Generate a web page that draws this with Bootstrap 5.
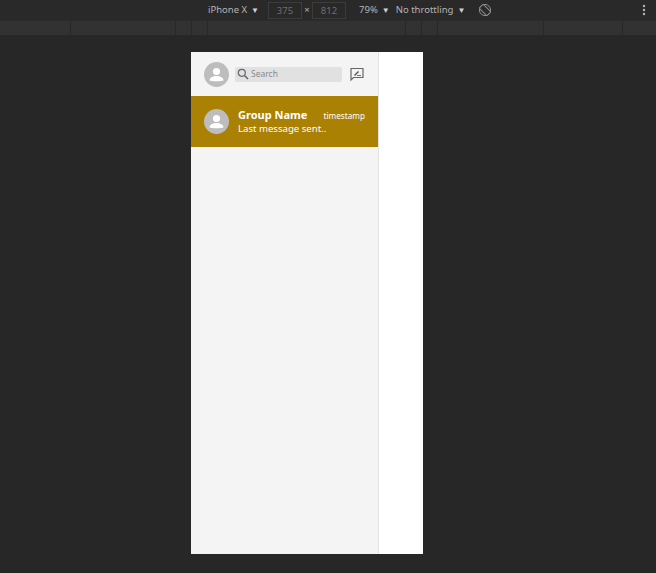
<!DOCTYPE html>
<html lang="en">
<head>
  <meta charset="UTF-8">
  <meta name="viewport" content="width=device-width, initial-scale=1.0">
  <title>Chat</title>
  <link href="https://cdn.jsdelivr.net/npm/bootstrap@5.3.3/dist/css/bootstrap.min.css" rel="stylesheet">
  <style>
    html, body { height: 100%; overflow: hidden; }
    body { background: #272727; font-family: "Noto Sans", "Open Sans", sans-serif; }
    .dev-top { height: 20px; padding-left: 208px; font-size: 9.5px; color: #b4b4b4; white-space: nowrap; background: #292929; }
    .dev-num { width: 34px; height: 17px; margin-left: 9px; border: 1px solid #3c3c3c; color: #6e6e6e; line-height: 15px; text-align: center; }
    .dev-x { width: 10px; text-align: center; }
    .dev-x + .dev-num { margin-left: 0; }
    .dev-caret { font-size: 8px; margin-left: 4px; color: #d0d0d0; }
    .dev-zoom { margin-left: 13px; }
    .dev-net { margin-left: 6px; }
    .dev-rotate { margin-left: 13px; }
    .dev-more { margin-left: 150px; }
    .dev-ruler { height: 15px; background: #323232; border-top: 1px solid #2b2b2b; }
    .dev-tick { border-right: 1px solid #272727; height: 100%; }
    .phone { width: 232px; height: 502px; margin: 17px 0 0 191px; background: #fff; }
    .side { width: 188px; background: #f4f4f4; border-right: 1px solid #e2e2e2; }
    .side-head { height: 44px; padding-left: 13px; }
    .avatar { width: 25px; height: 25px; flex: none; }
    .search-box { width: 107px; height: 15px; flex: none; background: #e1e1e1; border-radius: 2px; font-size: 8.5px; color: #8a8a8a; margin: 0 8px 0 6px; padding-left: 2px; }
    .search-ico { margin-right: 2px; flex: none; }
    .chat-row { height: 51px; background: #ab8103; color: #fff; padding: 0 13px; }
    .chat-name { font-size: 11px; font-weight: 700; line-height: 13px; }
    .chat-time { font-size: 8.2px; line-height: 13px; padding-top: 2px; }
    .chat-last { font-size: 9.6px; line-height: 13px; }
    .chat-body { margin-left: 9px; margin-bottom: 1px; }
  </style>
</head>
<body>
  <div class="dev-top d-flex align-items-center">
    <span>iPhone X<span class="dev-caret">▼</span></span>
    <span class="dev-num">375</span>
    <span class="dev-x">×</span>
    <span class="dev-num">812</span>
    <span class="dev-zoom">79%<span class="dev-caret">▼</span></span>
    <span class="dev-net">No throttling<span class="dev-caret">▼</span></span>
    <svg class="dev-rotate" width="14" height="14" viewBox="0 0 14 14" fill="none" stroke="#8c8c8c">
      <circle cx="7" cy="7" r="5.600"/>
      <rect x="4.200" y="1.600" width="5.600" height="10.800" rx="1" transform="rotate(-45 7 7)" fill="#292929"/>
    </svg>
    <svg class="dev-more" width="4" height="12" viewBox="0 0 4 12" fill="#b4b4b4">
      <circle cx="2" cy="2" r="1.200"/><circle cx="2" cy="6" r="1.200"/><circle cx="2" cy="10" r="1.200"/>
    </svg>
  </div>
  <div class="dev-ruler d-flex">
    <div class="dev-tick" style="width:71px"></div>
    <div class="dev-tick" style="width:105px"></div>
    <div class="dev-tick" style="width:16px"></div>
    <div class="dev-tick" style="width:16px"></div>
    <div class="dev-tick" style="width:198px"></div>
    <div class="dev-tick" style="width:16px"></div>
    <div class="dev-tick" style="width:16px"></div>
    <div class="dev-tick" style="width:106px"></div>
    <div class="dev-tick" style="width:79px"></div>
  </div>

  <div class="phone d-flex">
    <div class="side">
      <div class="side-head d-flex align-items-center">
        <svg class="avatar" viewBox="0 0 25 25">
          <circle cx="12.500" cy="12.500" r="12.500" fill="#bdbdbd"/>
          <circle cx="12.500" cy="9.500" r="3.600" fill="#fff"/>
          <path d="M5.500 18.500c0-3 3.500-4.500 7-4.500s7 1.500 7 4.500c-2 1-12 1-14 0z" fill="#fff"/>
        </svg>
        <div class="search-box d-flex align-items-center">
          <svg class="search-ico" width="12" height="12" viewBox="0 0 12 12" fill="none" stroke="#666">
            <circle cx="4.800" cy="4.800" r="3.500" stroke-width="1.200"/>
            <path d="M7.500 7.500l3.500 3.500" stroke-width="1.600"/>
          </svg>
          Search
        </div>
        <svg width="14" height="14" viewBox="0 0 14 14" fill="none" stroke="#666">
          <path d="M1 1.500h12v9H3.500L1 13z" stroke-width="1.200"/>
          <path d="M4 8l4-4 1 1-4 4z" fill="#555" stroke="none"/>
          <path d="M7 8.500h4" stroke-width=".9"/>
        </svg>
      </div>
      <div class="chat-row d-flex align-items-center">
        <svg class="avatar" viewBox="0 0 25 25">
          <circle cx="12.500" cy="12.500" r="12.500" fill="#bdbdbd"/>
          <circle cx="12.500" cy="9.500" r="3.600" fill="#fff"/>
          <path d="M5.500 18.500c0-3 3.500-4.500 7-4.500s7 1.500 7 4.500c-2 1-12 1-14 0z" fill="#fff"/>
        </svg>
        <div class="chat-body flex-grow-1">
          <div class="d-flex justify-content-between align-items-center">
            <span class="chat-name">Group Name</span>
            <span class="chat-time">timestamp</span>
          </div>
          <div class="chat-last">Last message sent..</div>
        </div>
      </div>
    </div>
  </div>

  <script src="https://cdn.jsdelivr.net/npm/bootstrap@5.3.3/dist/js/bootstrap.bundle.min.js"></script>
</body>
</html>
